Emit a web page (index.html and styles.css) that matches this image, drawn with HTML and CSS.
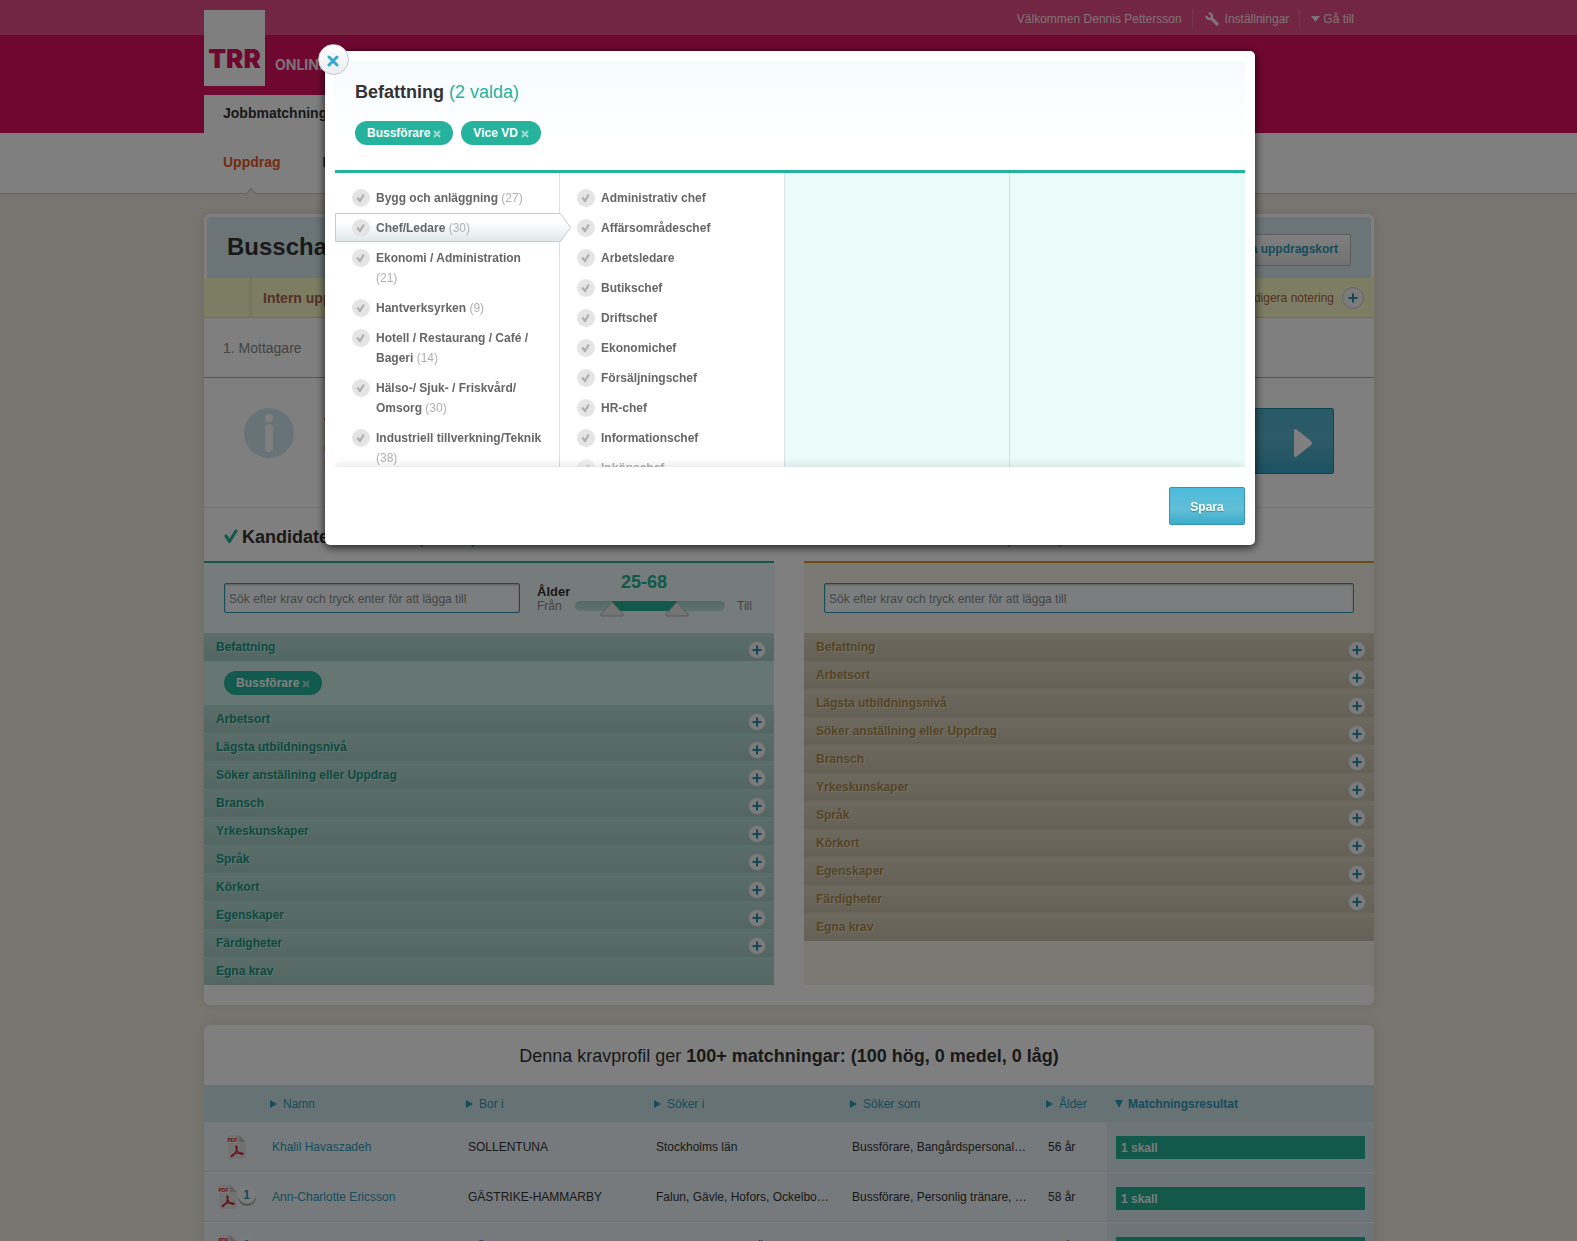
FILE: index.html
```html
<!DOCTYPE html>
<html lang="sv">
<head>
<meta charset="utf-8">
<title>TRR Online – Jobbmatchning</title>
<link rel="stylesheet" href="styles.css">
</head>
<body>
<svg class="sprite" width="0" height="0" aria-hidden="true">
  <symbol id="check" viewBox="0 0 14 15"><path d="M2 7 L5.500 12.500 L12 2" fill="none" stroke="currentColor" stroke-width="3.200" stroke-linecap="round" stroke-linejoin="round"/></symbol>
  <symbol id="cross" viewBox="0 0 8 8"><path d="M1 1 L7 7 M7 1 L1 7" fill="none" stroke="currentColor" stroke-width="2"/></symbol>
  <symbol id="plus" viewBox="0 0 10 10"><path d="M5 0.500 V9.500 M0.500 5 H9.500" fill="none" stroke="currentColor" stroke-width="2"/></symbol>
  <symbol id="tick" viewBox="0 0 18 18"><circle cx="9" cy="9" r="9" fill="#e5e5e5"/><path d="M5.300 8.500 L8 12 L11.800 5.500" fill="none" stroke="#b0b0b0" stroke-width="2.300" stroke-linejoin="round"/></symbol>
  <symbol id="pdf" viewBox="0 0 20 26">
    <path d="M1 1 H12 L19 8 V25 H1 Z" fill="#e4e4e4"/>
    <path d="M12 1 V8 H19 Z" fill="#c2c2c2"/>
    <rect x="0" y="3" width="10" height="6" fill="#f4f4f4"/>
    <text x="0.500" y="8" font-family="Liberation Sans" font-size="5" font-weight="bold" fill="#c8202a">PDF</text>
    <path d="M9 12 C11 12 10 16 8 19 C6 22.500 4 23.500 4.300 22 C4.600 20.500 9 19 12 18.800 C16 18.500 17.500 20 15 20.300 C12 20.500 8.500 15 9 12 Z" fill="none" stroke="#c8202a" stroke-width="1.200"/>
  </symbol>
</svg>

<header class="site-header">
  <div class="topbar">
    <div class="wrap topbar-inner">
      <span class="top-item">Välkommen Dennis Pettersson</span>
      <a class="top-item" href="#"><svg width="14" height="14" viewBox="0 0 14 14" fill="none" stroke="currentColor"><path d="M1.500 3.800 A2.800 2.800 0 1 0 3.800 1.500" stroke-width="2.400"/><path d="M6.500 6.500 L12 12" stroke-width="3.200" stroke-linecap="round"/></svg>Inställningar</a>
      <a class="top-item top-more" href="#"><svg width="9" height="6" viewBox="0 0 9 6"><path d="M0 0 H9 L4.500 6 Z" fill="currentColor"/></svg>Gå till</a>
    </div>
  </div>
  <div class="wrap brand">
    <a class="logo" href="#">TRR</a>
    <span class="brand-name">ONLINE</span>
  </div>
  <div class="wrap"><a class="main-tab" href="#">Jobbmatchning</a></div>
</header>
<nav class="subnav">
  <div class="wrap subnav-inner">
    <a class="current" href="#">Uppdrag</a>
    <a href="#">Företag</a>
  </div>
</nav>

<main class="wrap">
  <section class="card">
    <div class="card-head">
      <h1>Busschaufför</h1>
      <button class="ghost-btn" type="button">Visa uppdragskort</button>
    </div>
    <div class="note-bar">
      <strong>Intern uppdragsnotering</strong>
      <span class="note-edit">Redigera notering <button class="round big" type="button" aria-label="Redigera notering"><svg width="10" height="10"><use href="#plus"/></svg></button></span>
    </div>
    <div class="steps">1. Mottagare</div>
    <div class="info">
      <svg class="info-icon" width="50" height="50" viewBox="0 0 50 50"><circle cx="25" cy="25" r="25" fill="#cfe6ee"/><circle cx="25" cy="10" r="4" fill="#fff"/><rect x="21" y="16" width="8" height="28" rx="4" fill="#fff"/></svg>
      <p>Ange de krav som gäller.<br>Listan nedan uppdateras<br>när du ändrar kraven.<br>Därefter går du vidare.</p>
      <button class="next-btn" type="button">Gå vidare<svg width="18" height="28" viewBox="0 0 18 28"><path d="M0 1 Q0 0 2 0 L17 12 Q19 14 17 16 L2 28 Q0 28 0 27 Z" fill="#fff"/></svg></button>
    </div>
    <div class="profiles">
      <section class="profile green">
        <h2><svg width="14" height="15"><use href="#check"/></svg>Kandidatens behov <span>(1 vald)</span></h2>
        <div class="panel">
          <div class="search">
            <input type="text" aria-label="Sök krav för kandidat" placeholder="Sök efter krav och tryck enter för att lägga till">
            <div class="age">
              <div class="age-from"><b>Ålder</b><span>Från</span></div>
              <div class="age-mid"><output>25-68</output>
                <div class="track"><i class="fill"></i>
                  <svg class="handle low" width="24" height="16" viewBox="0 0 24 16"><path d="M12 1 L23 13 Q24 15 22 15 H2 Q0 15 1 13 Z" fill="#e9e9e9" stroke="#b5b5b5"/></svg>
                  <svg class="handle high" width="24" height="16" viewBox="0 0 24 16"><path d="M12 1 L23 13 Q24 15 22 15 H2 Q0 15 1 13 Z" fill="#e9e9e9" stroke="#b5b5b5"/></svg>
                </div>
              </div>
              <span class="age-to">Till</span>
            </div>
          </div>
          <ul class="rows">
            <li>Befattning<button class="round" type="button" aria-label="Lägg till"><svg width="10" height="10"><use href="#plus"/></svg></button></li>
            <li class="chosen"><span class="pill">Bussförare<svg width="8" height="8"><use href="#cross"/></svg></span></li>
            <li>Arbetsort<button class="round" type="button" aria-label="Lägg till"><svg width="10" height="10"><use href="#plus"/></svg></button></li>
            <li>Lägsta utbildningsnivå<button class="round" type="button" aria-label="Lägg till"><svg width="10" height="10"><use href="#plus"/></svg></button></li>
            <li>Söker anställning eller Uppdrag<button class="round" type="button" aria-label="Lägg till"><svg width="10" height="10"><use href="#plus"/></svg></button></li>
            <li>Bransch<button class="round" type="button" aria-label="Lägg till"><svg width="10" height="10"><use href="#plus"/></svg></button></li>
            <li>Yrkeskunskaper<button class="round" type="button" aria-label="Lägg till"><svg width="10" height="10"><use href="#plus"/></svg></button></li>
            <li>Språk<button class="round" type="button" aria-label="Lägg till"><svg width="10" height="10"><use href="#plus"/></svg></button></li>
            <li>Körkort<button class="round" type="button" aria-label="Lägg till"><svg width="10" height="10"><use href="#plus"/></svg></button></li>
            <li>Egenskaper<button class="round" type="button" aria-label="Lägg till"><svg width="10" height="10"><use href="#plus"/></svg></button></li>
            <li>Färdigheter<button class="round" type="button" aria-label="Lägg till"><svg width="10" height="10"><use href="#plus"/></svg></button></li>
            <li>Egna krav</li>
          </ul>
        </div>
      </section>
      <section class="profile gold">
        <h2><svg width="14" height="15"><use href="#check"/></svg>Kundens alla krav <span>(0 vald)</span></h2>
        <div class="panel">
          <div class="search">
            <input type="text" aria-label="Sök krav för uppdrag" placeholder="Sök efter krav och tryck enter för att lägga till">
          </div>
          <ul class="rows">
            <li>Befattning<button class="round" type="button" aria-label="Lägg till"><svg width="10" height="10"><use href="#plus"/></svg></button></li>
            <li>Arbetsort<button class="round" type="button" aria-label="Lägg till"><svg width="10" height="10"><use href="#plus"/></svg></button></li>
            <li>Lägsta utbildningsnivå<button class="round" type="button" aria-label="Lägg till"><svg width="10" height="10"><use href="#plus"/></svg></button></li>
            <li>Söker anställning eller Uppdrag<button class="round" type="button" aria-label="Lägg till"><svg width="10" height="10"><use href="#plus"/></svg></button></li>
            <li>Bransch<button class="round" type="button" aria-label="Lägg till"><svg width="10" height="10"><use href="#plus"/></svg></button></li>
            <li>Yrkeskunskaper<button class="round" type="button" aria-label="Lägg till"><svg width="10" height="10"><use href="#plus"/></svg></button></li>
            <li>Språk<button class="round" type="button" aria-label="Lägg till"><svg width="10" height="10"><use href="#plus"/></svg></button></li>
            <li>Körkort<button class="round" type="button" aria-label="Lägg till"><svg width="10" height="10"><use href="#plus"/></svg></button></li>
            <li>Egenskaper<button class="round" type="button" aria-label="Lägg till"><svg width="10" height="10"><use href="#plus"/></svg></button></li>
            <li>Färdigheter<button class="round" type="button" aria-label="Lägg till"><svg width="10" height="10"><use href="#plus"/></svg></button></li>
            <li>Egna krav</li>
          </ul>
        </div>
      </section>
    </div>
  </section>

  <section class="card results">
    <h2>Denna kravprofil ger <b>100+ matchningar: (100 hög, 0 medel, 0 låg)</b></h2>
    <table>
      <colgroup><col class="c-icon"><col class="c-wide"><col class="c-city"><col class="c-wide"><col class="c-wide"><col class="c-age"><col></colgroup>
      <thead>
        <tr><th></th><th><a href="#">Namn</a></th><th><a href="#">Bor i</a></th><th><a href="#">Söker i</a></th><th><a href="#">Söker som</a></th><th><a href="#">Ålder</a></th><th class="sorted"><a href="#">Matchningsresultat</a></th></tr>
      </thead>
      <tbody>
        <tr><td class="files"><svg width="20" height="26"><use href="#pdf"/></svg></td><td><a href="#">Khalil Havaszadeh</a></td><td>SOLLENTUNA</td><td>Stockholms län</td><td>Bussförare, Bangårdspersonal, Lokförare</td><td>56 år</td><td class="score"><div class="bar">1 skall</div></td></tr>
        <tr><td class="files"><svg width="20" height="26"><use href="#pdf"/></svg><span class="count">1</span></td><td><a href="#">Ann-Charlotte Ericsson</a></td><td>GÄSTRIKE-HAMMARBY</td><td>Falun, Gävle, Hofors, Ockelbo, Sandviken</td><td>Bussförare, Personlig tränare, Säljare</td><td>58 år</td><td class="score"><div class="bar">1 skall</div></td></tr>
        <tr><td class="files"><svg width="20" height="26"><use href="#pdf"/></svg><span class="count">1</span></td><td><a href="#">Anna Larsson</a></td><td>GÄVLE</td><td>Västerbottens län, Örebro län</td><td>Bussförare</td><td>51 år</td><td class="score"><div class="bar">1 skall</div></td></tr>
      </tbody>
    </table>
  </section>
</main>

<div class="overlay">
  <div class="modal" role="dialog" aria-modal="true" aria-labelledby="dlg-title">
    <button class="close" type="button" aria-label="Stäng"><svg width="12" height="12" viewBox="0 0 12 12"><path d="M2 2 L10 10 M10 2 L2 10" stroke="#36a9cf" stroke-width="3" stroke-linecap="round"/></svg></button>
    <div class="modal-head">
      <h2 id="dlg-title">Befattning <span>(2 valda)</span></h2>
      <div class="pills">
        <span class="pill">Bussförare<svg width="8" height="8"><use href="#cross"/></svg></span>
        <span class="pill">Vice VD<svg width="8" height="8"><use href="#cross"/></svg></span>
      </div>
    </div>
    <div class="columns">
      <ul class="column">
        <li><svg class="tick" width="18" height="18"><use href="#tick"/></svg><span>Bygg och anläggning <small>(27)</small></span></li>
        <li class="active"><svg class="pointer" width="236" height="30" viewBox="0 0 236 30" aria-hidden="true"><defs><linearGradient id="pg" x2="0" y2="1"><stop offset="0.300" stop-color="#fff"/><stop offset="1" stop-color="#dfe8ea"/></linearGradient></defs><path d="M0.500 0.500 H225.500 L235.500 14.500 L225.500 28.500 H0.500 Z" fill="url(#pg)" stroke="#c8cbcc"/></svg><svg class="tick" width="18" height="18"><use href="#tick"/></svg><span>Chef/Ledare <small>(30)</small></span></li>
        <li><svg class="tick" width="18" height="18"><use href="#tick"/></svg><span>Ekonomi / Administration <small>(21)</small></span></li>
        <li><svg class="tick" width="18" height="18"><use href="#tick"/></svg><span>Hantverksyrken <small>(9)</small></span></li>
        <li><svg class="tick" width="18" height="18"><use href="#tick"/></svg><span>Hotell / Restaurang / Café / Bageri <small>(14)</small></span></li>
        <li><svg class="tick" width="18" height="18"><use href="#tick"/></svg><span>Hälso-/ Sjuk- / Friskvård/ Omsorg <small>(30)</small></span></li>
        <li><svg class="tick" width="18" height="18"><use href="#tick"/></svg><span>Industriell tillverkning/Teknik <small>(38)</small></span></li>
      </ul>
      <ul class="column">
        <li><svg class="tick" width="18" height="18"><use href="#tick"/></svg><span>Administrativ chef</span></li>
        <li><svg class="tick" width="18" height="18"><use href="#tick"/></svg><span>Affärsområdeschef</span></li>
        <li><svg class="tick" width="18" height="18"><use href="#tick"/></svg><span>Arbetsledare</span></li>
        <li><svg class="tick" width="18" height="18"><use href="#tick"/></svg><span>Butikschef</span></li>
        <li><svg class="tick" width="18" height="18"><use href="#tick"/></svg><span>Driftschef</span></li>
        <li><svg class="tick" width="18" height="18"><use href="#tick"/></svg><span>Ekonomichef</span></li>
        <li><svg class="tick" width="18" height="18"><use href="#tick"/></svg><span>Försäljningschef</span></li>
        <li><svg class="tick" width="18" height="18"><use href="#tick"/></svg><span>HR-chef</span></li>
        <li><svg class="tick" width="18" height="18"><use href="#tick"/></svg><span>Informationschef</span></li>
        <li class="faded"><svg class="tick" width="18" height="18"><use href="#tick"/></svg><span>Inköpschef</span></li>
      </ul>
      <div class="column empty"></div>
      <div class="column empty"></div>
    </div>
    <div class="modal-foot"><button class="save" type="button">Spara</button></div>
  </div>
</div>
</body>
</html>
```

FILE: styles.css
```css
* { box-sizing: border-box; }
html, body { height: 100%; overflow: hidden; }
body {
  margin: 0;
  font: 12px/16px "Liberation Sans", Arial, sans-serif;
  color: #333;
  background: #efece0;
}
ul { list-style: none; margin: 0; padding: 0; }
h1, h2, p { margin: 0; }
a { text-decoration: none; color: inherit; }
button { font: inherit; cursor: pointer; padding: 0; }
svg { display: block; flex: none; }
.sprite { position: absolute; }
.wrap { max-width: 1171px; margin: 0 auto; padding-left: 1px; }

/* Header */
.site-header { background: #dc1060; height: 133px; }
.topbar { background: #e64c82; height: 35px; }
.topbar-inner { display: flex; justify-content: flex-end; align-items: center; height: 35px; padding: 2px 20px 0 0; color: #fbe4ee; }
.top-item { display: flex; align-items: center; gap: 6px; height: 19px; padding-right: 10px; }
.top-item + .top-item { border-left: 1px solid #ee6d9a; padding-left: 12px; }
.top-item.top-more { gap: 3px; padding-right: 0; padding-left: 11px; }
.brand { display: flex; align-items: flex-end; height: 51px; gap: 10px; font-family: Inter, "Liberation Sans", sans-serif; font-weight: 900; }
.logo { width: 61px; height: 76px; background: #fff; color: #dc1060; font-size: 26px; line-height: 26px; padding-top: 36px; text-align: center; }
.brand-name { color: #fbe4ee; font-size: 14px; line-height: 16px; padding-bottom: 13px; font-weight: 700; }
.main-tab { display: block; width: 160px; height: 38px; margin-top: 9px; padding: 10px 19px; background: #fff; font-size: 14px; font-weight: bold; }
.subnav { background: #fff; height: 61px; border-bottom: 1px solid #c8c8c4; }
.subnav-inner { display: flex; gap: 42px; padding: 21px 19px 0 20px; font-size: 14px; font-weight: bold; }
.subnav .current { position: relative; color: #e85a22; }
.subnav .current::after {
  content: ""; position: absolute; left: 24px; top: 36px; width: 7px; height: 7px;
  background: #efece0; border: solid #c8c8c4; border-width: 1px 0 0 1px; transform: rotate(45deg);
}

/* Cards */
.card { background: #fff; border-radius: 6px; margin-top: 20px; box-shadow: 0 0 12px rgba(90, 80, 40, .15); }
.card-head { display: flex; justify-content: space-between; align-items: flex-start; height: 64px; border: 3px solid #fff; border-bottom: 0; border-radius: 7px 7px 0 0; background: #d6eaf0; padding: 17px 20px 0; }
.card-head h1 { font-size: 24px; line-height: 26px; }
.ghost-btn { height: 32px; padding: 0 12px 2px; border: 1px solid #b4bcc0; border-radius: 2px; background: linear-gradient(#fff, #e4e4e4); color: #2a9ab8; font-weight: bold; }
.note-bar { display: flex; justify-content: space-between; align-items: center; height: 40px; padding: 0 10px 0 0; background: linear-gradient(90deg, transparent 45px, #e4e6b4 45px, #e4e6b4 46px, transparent 46px, transparent 47px, #e4e6b4 47px, #e4e6b4 48px, transparent 48px) #f8fbc6; border-bottom: 1px solid #d8dac0; color: #a8624e; }
.note-bar strong { font-size: 14px; padding-left: 59px; }
.note-edit { display: flex; align-items: center; gap: 8px; }
.round { display: grid; place-items: center; flex: none; width: 18px; height: 18px; border: 1px solid #c8d0d4; border-radius: 50%; background: #f6f6f8; color: #2a8fae; }
.round.big { width: 22px; height: 22px; }
.steps { height: 60px; padding: 22px 19px; border-bottom: 1px solid #aaa; font-size: 14px; color: #888; }
.info { display: flex; align-items: flex-start; height: 130px; padding: 30px 40px; border-bottom: 1px solid #dceef0; }
.info p { flex: 1; padding: 0 0 0 30px; line-height: 16px; }
.next-btn { display: flex; align-items: center; justify-content: space-between; width: 300px; height: 66px; padding: 4px 21px 0 30px; border: 1px solid #2488a4; border-radius: 2px; background: linear-gradient(#50b4d0, #5cb4cc 50%, #36a4c4); color: #fff; font-size: 18px; font-weight: bold; }

/* Profiles */
.profiles { display: grid; grid-template-columns: 1fr 1fr; gap: 30px; padding-bottom: 20px; }
.profile { display: flex; flex-direction: column; }
.profile h2 { display: flex; align-items: center; gap: 4px; height: 53px; padding: 4px 20px 0; font-size: 18px; line-height: 20px; white-space: pre; }
.profile h2 span { font-weight: normal; }
.green h2 svg, .green h2 span { color: #24b297; }
.gold h2 svg, .gold h2 span { color: #e09a20; }
.panel { flex: 1; border-top: 2px solid; }
.green .panel { background: #ecf8f8; border-color: #24b297; }
.gold .panel { background: #f6f2e8; border-color: #e09a20; }
.search { display: flex; height: 70px; padding: 20px; }
.search input { flex: 1; min-width: 0; height: 30px; padding: 2px 4px 0; border: 1px solid #3098b4; border-radius: 2px; background: #f6fbfd; box-shadow: inset 0 1px 2px #bbb; font: inherit; }
.green .search input { flex: 0 0 296px; }
.search input::placeholder { color: #8c8c8c; opacity: 1; }
.age { display: flex; padding-left: 17px; color: #888; }
.age-from { display: flex; flex-direction: column; width: 38px; padding-top: 1px; }
.age-from b { font-size: 13px; line-height: 15px; color: #333; }
.age-from span { line-height: 14px; }
.age-mid { width: 150px; margin-top: -11px; }
.age-mid output { display: block; height: 29px; padding-right: 12px; text-align: center; font-size: 18px; line-height: 20px; font-weight: bold; color: #24b297; }
.track { position: relative; height: 10px; border-radius: 5px; background: linear-gradient(#a8d4ca, #c0e6de); }
.track .fill { position: absolute; left: 37px; width: 65px; height: 10px; background: #24b297; }
.handle { position: absolute; top: 0; }
.low { left: 25px; }
.high { left: 90px; }
.age-to { padding: 15px 0 0 12px; }
.rows li { display: flex; justify-content: space-between; align-items: flex-start; height: 28px; padding: 6px 8px 0 12px; font-weight: bold; }
.rows .round { margin-top: 2px; }
.green li { background: linear-gradient(#b6dcd4, #a6ccc4); color: #18947e; text-shadow: 1px 1px 1px #d0ece6; }
.gold li { background: linear-gradient(#dcd2bc, #ccc2ac); color: #a88a48; text-shadow: 1px 1px 1px #ece4d4; }
.green .rows .chosen { height: 44px; padding: 10px 20px; background: #cdeee6; color: #fff; text-shadow: none; }
.pill { display: inline-flex; align-items: center; gap: 3px; height: 24px; padding: 0 12px; border-radius: 12px; background: #25b39d; color: #fff; font-weight: bold; }
.pill svg { margin-top: 2px; color: #a0dcd2; }

/* Results */
.results h2 { height: 60px; padding-top: 20px; text-align: center; font-size: 18px; line-height: 22px; font-weight: normal; }
table { width: 100%; table-layout: fixed; border-collapse: collapse; text-align: left; }
.c-icon { width: 58px; }
.c-wide { width: 196px; }
.c-city { width: 188px; }
.c-age { width: 69px; }
th, td { padding: 0 10px; overflow: hidden; white-space: nowrap; text-overflow: ellipsis; }
th { height: 37px; padding-left: 8px; background: #cfe4e8; font-weight: normal; }
th a { display: flex; align-items: center; gap: 6px; color: #2a9ab8; }
th a::before { content: ""; border: solid transparent; border-width: 4px 0 4px 7px; border-left-color: #2a9ab8; }
th.sorted { font-weight: bold; }
th.sorted a { gap: 5px; }
th.sorted a::before { border-width: 8px 4px 0; border-color: #2a9ab8 transparent transparent; }
td { height: 50px; background: #ecf5f8; border-bottom: 1px solid #fff; box-shadow: inset 0 -1px #d4e0e8; }
td a { color: #2a9ab8; }
td.score { background: #dcebf1; padding: 2px 9px 0; }
.bar { height: 23px; padding: 4px 5px; line-height: 16px; background: #24b297; color: #f4f4f4; font-weight: bold; }
.files { padding: 0 0 0 7px; text-align: center; }
.files svg, .count { display: inline-block; vertical-align: middle; }
.count { width: 18px; height: 18px; margin-bottom: 4px; border-radius: 50%; background: #f6f6f6; box-shadow: 0 2px #a8a498; color: #2a9ab8; font: bold 12px/18px "Liberation Sans", sans-serif; }

/* Dialog */
.overlay { position: fixed; inset: 0; display: flex; align-items: flex-start; justify-content: center; padding: 51px 0 0 3px; background: rgba(0, 0, 0, .5); }
.modal { position: relative; width: 930px; max-width: 100%; padding: 10px; border-radius: 5px; background: #fff; box-shadow: 0 2px 10px rgba(0, 0, 0, .8); }
.close { position: absolute; left: -7px; top: -7px; z-index: 2; display: grid; place-items: center; width: 31px; height: 31px; padding: 2px 2px 0 0; border: 1px solid #c4c8ca; border-radius: 50%; background: linear-gradient(#fff, #e8edef); }
.modal-head { height: 112px; padding: 21px 20px 19px; border-bottom: 3px solid #25b39d; background: linear-gradient(#f6fbff, #fff 80%); }
.modal-head h2 { font-size: 18px; line-height: 20px; }
.modal-head h2 span { font-weight: normal; color: #25b39d; }
.pills { display: flex; gap: 8px; margin-top: 19px; }
.columns { display: flex; height: 294px; overflow: hidden; }
.column { flex: 0 0 225px; padding-top: 10px; border-right: 1px solid #d8e2e4; }
.column:last-child { flex: 1; border: 0; }
.column li { position: relative; display: flex; gap: 6px; padding: 5px 16px 5px 17px; line-height: 20px; font-weight: bold; color: #666; }
.column small { font-size: 12px; font-weight: normal; color: #b0b0b0; }
.tick { margin-top: 1px; }
.pointer { position: absolute; left: 0; top: 0; }
.active .tick, .active span { position: relative; }
.faded { opacity: .5; }
.empty { background: #ebfcf8; }
.modal-foot { position: relative; display: flex; justify-content: flex-end; height: 68px; padding-top: 20px; background: #fff; box-shadow: 0 0 10px rgba(0, 0, 0, .15); clip-path: inset(-12px 0 0 0); }
.save { width: 76px; height: 38px; padding-top: 2px; border: 1px solid #3594ae; border-radius: 2px; background: linear-gradient(#4cbcdc, #62bed6 60%, #3aaccc); color: #fff; font-weight: bold; text-shadow: 0 1px 1px #388; }
```
